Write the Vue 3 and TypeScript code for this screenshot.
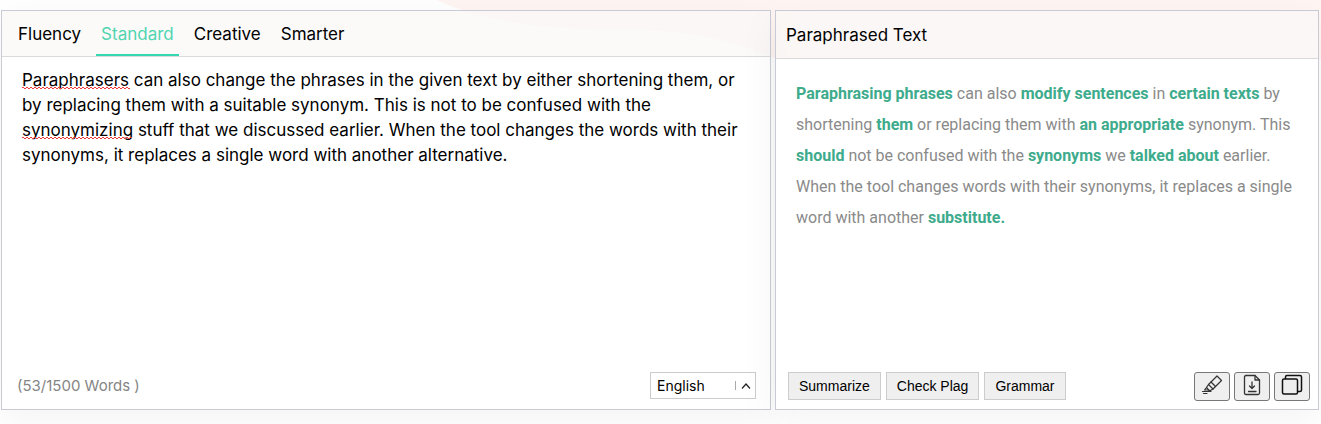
<script setup lang="ts">
import { ref } from 'vue'

interface Chunk {
  text: string
  changed?: boolean
}

const modes: string[] = ['Fluency', 'Standard', 'Creative', 'Smarter']
const activeMode = ref('Standard')
const language = ref('English')
const source = ref(
  'Paraphrasers can also change the phrases in the given text by either shortening them, or\n' +
    'by replacing them with a suitable synonym. This is not to be confused with the\n' +
    'synonymizing stuff that we discussed earlier. When the tool changes the words with their\n' +
    'synonyms, it replaces a single word with another alternative.',
)

const result: Chunk[] = [
  { text: 'Paraphrasing phrases', changed: true },
  { text: ' can also ' },
  { text: 'modify sentences', changed: true },
  { text: ' in ' },
  { text: 'certain texts', changed: true },
  { text: ' by shortening ' },
  { text: 'them', changed: true },
  { text: ' or replacing them with ' },
  { text: 'an appropriate', changed: true },
  { text: ' synonym. This ' },
  { text: 'should', changed: true },
  { text: ' not be confused with the ' },
  { text: 'synonyms', changed: true },
  { text: ' we ' },
  { text: 'talked about', changed: true },
  { text: ' earlier. When the tool changes words with their synonyms, it replaces a single word with another ' },
  { text: 'substitute.', changed: true },
]

const actions: string[] = ['Summarize', 'Check Plag', 'Grammar']
</script>

<template>
  <main class="page">
    <svg class="blob" viewBox="0 0 880 60" preserveAspectRatio="none" aria-hidden="true">
      <path d="M0 0C60 26 120 30 190 30C260 29 300 44 342 60H880V0Z" fill="#fff5f3" />
    </svg>

    <section class="panel source">
      <nav class="head tabs">
        <button
          v-for="mode in modes"
          :key="mode"
          type="button"
          class="tab"
          :class="{ active: mode === activeMode }"
          @click="activeMode = mode"
        >{{ mode }}</button>
      </nav>
      <div class="editor">
        <textarea v-model="source" class="input" aria-label="Text to paraphrase" spellcheck="false"></textarea>
        <span class="squiggle first"></span>
        <span class="squiggle second"></span>
      </div>
      <footer class="foot source-foot">
        <span class="count">(53/1500 Words )</span>
        <div class="language">
          <select v-model="language" aria-label="Language">
            <option>English</option>
          </select>
          <svg class="caret" width="16" height="10" viewBox="0 0 16 10" aria-hidden="true">
            <path d="M0.5 0V9" stroke="#aaa" fill="none" />
            <path d="M7 7.500L11 3L15 7.500" stroke="#222" stroke-width="1.2" fill="none" />
          </svg>
        </div>
      </footer>
    </section>

    <section class="panel output">
      <h2 class="head title">Paraphrased Text</h2>
      <p class="result"><template v-for="(chunk, i) in result" :key="i"><b v-if="chunk.changed">{{ chunk.text }}</b><template v-else>{{ chunk.text }}</template></template></p>
      <footer class="foot output-foot">
        <button v-for="action in actions" :key="action" type="button" class="action">{{ action }}</button>
        <div class="tools">
          <button type="button" class="tool" aria-label="Highlight">
            <svg width="22" height="22" viewBox="0 0 22 22" fill="none" stroke="#333" stroke-width="1.2" stroke-linejoin="round" stroke-linecap="round">
              <path d="M16 2L20.500 6.500L12 15L7.500 10.500Z" />
              <path d="M7.500 10.500L5.500 13.500L8.500 17L12 15" />
              <path d="M10 8L14.500 12.500" />
              <path d="M5.500 13.500L3.500 16H8M1.500 17.500H10M2.500 19.500H6" />
            </svg>
          </button>
          <button type="button" class="tool" aria-label="Download">
            <svg width="22" height="22" viewBox="0 0 22 22" fill="none" stroke="#333" stroke-width="1.3" stroke-linejoin="round" stroke-linecap="round">
              <path d="M5 1.500H14L18.500 6V19Q18.500 20.500 17 20.500H5Q3.500 20.500 3.500 19V3Q3.500 1.500 5 1.500Z" />
              <path d="M14 1.500V6H18.500" />
              <path d="M11 8V14.500M8.500 12L11 14.500L13.500 12M7.500 17.500H15" />
            </svg>
          </button>
          <button type="button" class="tool" aria-label="Copy">
            <svg width="22" height="22" viewBox="0 0 22 22" fill="none" stroke="#111" stroke-width="1.5" stroke-linejoin="round">
              <rect x="1.5" y="5" width="15" height="15" rx="1.5" />
              <path d="M4.500 5V3Q4.500 1.500 6 1.500H19Q20.500 1.500 20.500 3V16Q20.500 17.500 19 17.500H17" />
            </svg>
          </button>
        </div>
      </footer>
    </section>
  </main>
</template>

<style>
body {
  margin: 0;
  background: #fff;
}
</style>

<style scoped>
.page {
  position: relative;
  display: grid;
  grid-template-columns: 770fr 544fr;
  gap: 4px;
  min-height: 424px;
  padding: 10px 2px 14px 1px;
  box-sizing: border-box;
  overflow: hidden;
  font-family: Inter, "Open Sans", sans-serif;
  color: #000;
}

.page * {
  box-sizing: border-box;
}

.blob {
  position: absolute;
  top: 0;
  right: 0;
  width: 67%;
  height: 60px;
}

.panel {
  position: relative;
  display: flex;
  flex-direction: column;
  min-width: 0;
  border: 1px solid #c8cad5;
  box-shadow: 0 10px 40px rgba(0, 0, 0, 0.05);
  background: linear-gradient(transparent 48px, #fff 48px);
}

.source {
  background: linear-gradient(transparent 46px, #fff 46px);
}

.head {
  background: rgba(249, 248, 247, 0.7);
  border-bottom: 1px solid #dadada;
}

.tabs {
  display: flex;
  gap: 10px;
  height: 46px;
  padding: 0 11px;
}

.tab {
  padding: 2px 5px 0;
  border: 0;
  border-bottom: 2px solid transparent;
  background: none;
  font: 17px Inter, sans-serif;
  color: #000;
}

.tab.active {
  color: #4fd5b0;
  border-bottom-color: #36d6b0;
}

.title {
  height: 48px;
  margin: 0;
  padding: 0 10px;
  font-size: 17px;
  font-weight: 400;
  line-height: 48px;
}

.editor {
  position: relative;
  display: flex;
  flex: 1;
}

.input {
  width: 100%;
  padding: 11px 20px;
  border: 0;
  outline: 0;
  resize: none;
  background: transparent;
  font: 17px/25px Inter, sans-serif;
  color: #000;
  white-space: pre-wrap;
  overflow: hidden;
}

.squiggle {
  position: absolute;
  left: 20px;
  height: 2px;
  background:
    repeating-linear-gradient(90deg, #f03a3a 0 2px, transparent 2px 4px) 0 0 / 100% 1px no-repeat,
    repeating-linear-gradient(90deg, transparent 0 2px, #f03a3a 2px 4px) 0 1px / 100% 1px no-repeat;
}

.first {
  top: 30px;
  width: 108px;
}

.second {
  top: 80px;
  width: 110px;
}

.foot {
  display: flex;
  align-items: center;
}

.source-foot {
  justify-content: space-between;
  padding: 0 14px 10px 15px;
}

.count {
  font-size: 15px;
  color: #858585;
}

.language {
  position: relative;
  width: 106px;
  height: 27px;
}

.language select {
  width: 100%;
  height: 100%;
  padding: 0 6px;
  border: 1px solid #ccc;
  border-radius: 0;
  appearance: none;
  background: #fff;
  font: 14px Inter, sans-serif;
  color: #000;
}

.caret {
  position: absolute;
  top: 9px;
  right: 5px;
  pointer-events: none;
}

.result {
  flex: 1;
  margin: 0;
  padding: 19px 20px;
  font: 16px/31px Roboto, sans-serif;
  color: #8a8a8a;
}

.result b {
  font-weight: 700;
  color: #3dab8c;
}

.output-foot {
  align-items: flex-start;
  gap: 5px;
  padding: 0 8px 8px 12px;
}

.action {
  height: 28px;
  padding: 0 10px;
  border: 1px solid #ccc;
  background: #efefef;
  font: 14px "Liberation Sans", Arial, sans-serif;
  color: #000;
}

.tools {
  display: flex;
  gap: 4px;
  margin-left: auto;
}

.tool {
  display: grid;
  place-items: center;
  width: 36px;
  height: 29px;
  padding: 0 0 3px;
  border: 1px solid #777;
  border-radius: 3px;
  background: #efefef;
}
</style>
